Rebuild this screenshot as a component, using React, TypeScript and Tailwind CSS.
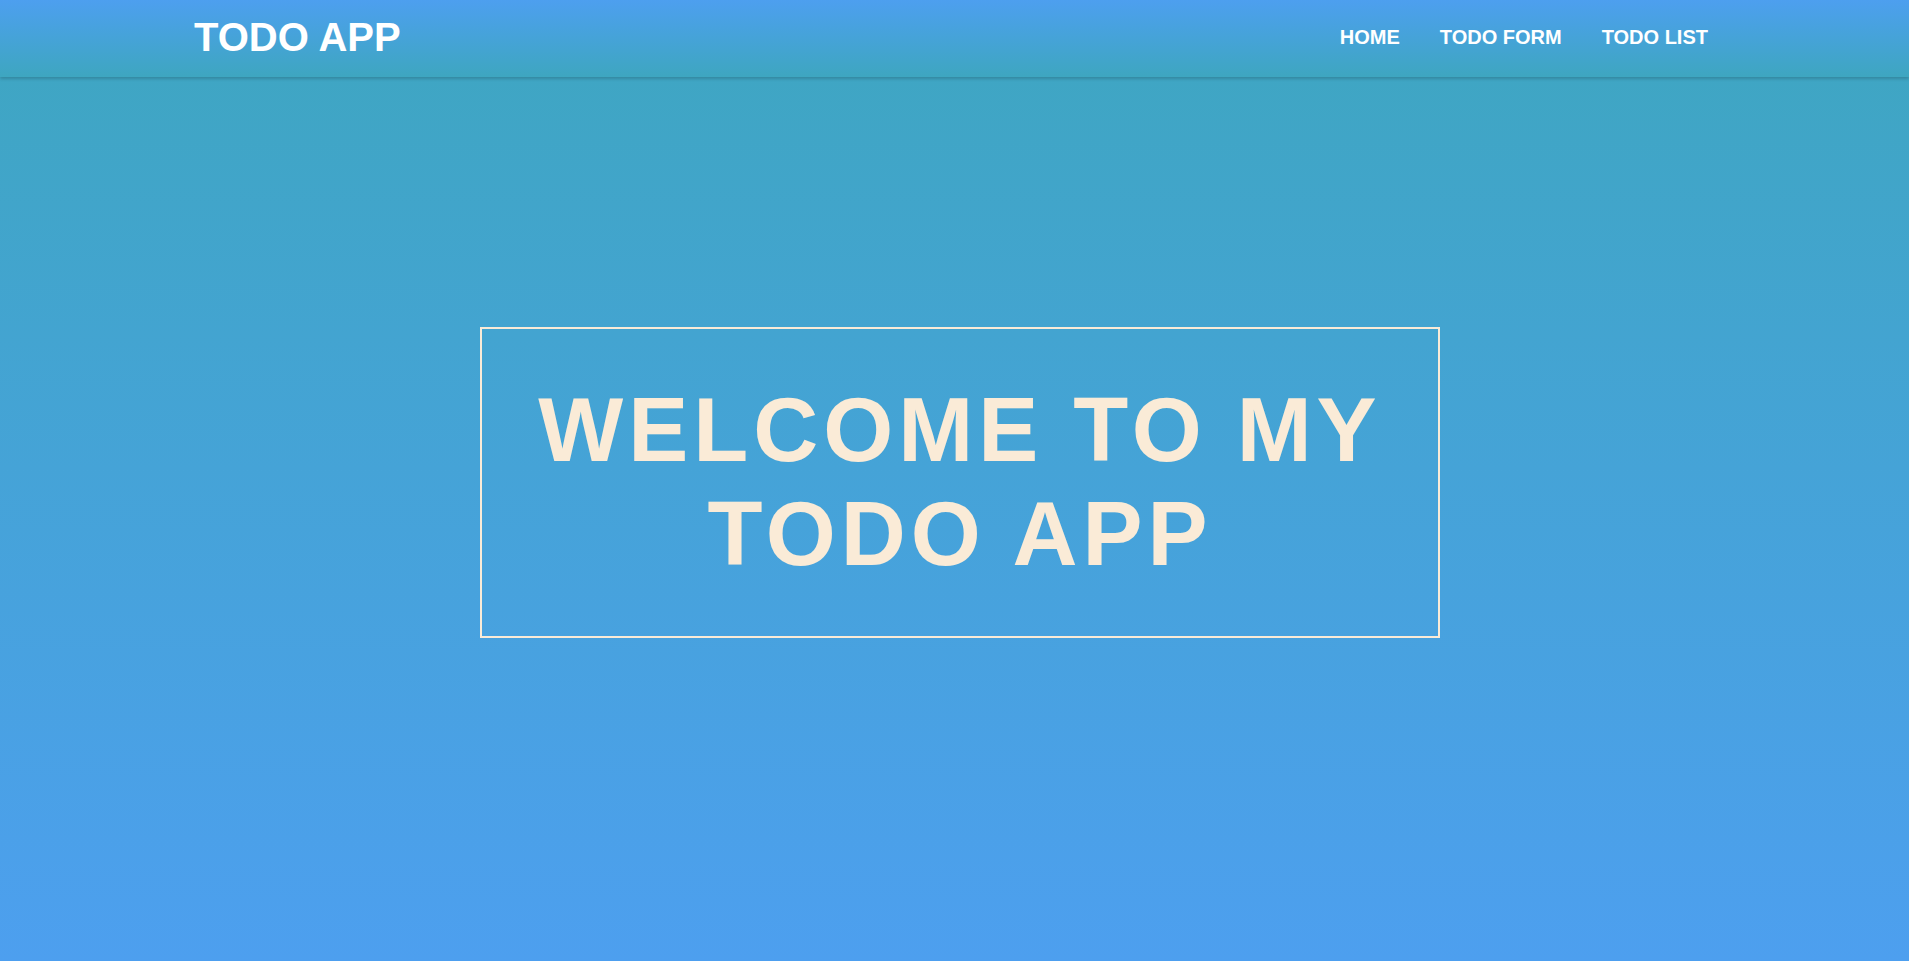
const links = ["HOME", "TODO FORM", "TODO LIST"];

function Navbar() {
  return (
    <header className="relative z-10 h-[77px] bg-linear-to-b from-[#4d9fef] to-[#3ea6c0] shadow-[0_2px_3px_rgba(0,0,0,0.18)]">
      <div className="flex h-full items-center justify-between pb-[4px] pl-[194px] pr-[201px]">
        <a href="#" className="text-[40px] font-bold leading-none text-white">
          TODO APP
        </a>
        <nav className="flex items-center gap-[40px]">
          {links.map((label) => (
            <a key={label} href="#" className="text-[20px] font-bold leading-none text-white">
              {label}
            </a>
          ))}
        </nav>
      </div>
    </header>
  );
}

export default function App() {
  return (
    <div className="flex h-screen flex-col bg-linear-to-b from-[#3ea6c0] to-[#4d9fef] font-['Liberation_Sans',Arial,sans-serif]">
      <Navbar />
      <main className="flex flex-1 items-center justify-center pb-[73px] pl-[11px]">
        <div className="w-[960px] border-2 border-[#faebd7] py-[50px] text-center">
          <h1 className="text-[90px] font-bold leading-[1.15] tracking-[5px] text-[#faebd7]">
            WELCOME TO MY TODO APP
          </h1>
        </div>
      </main>
    </div>
  );
}
